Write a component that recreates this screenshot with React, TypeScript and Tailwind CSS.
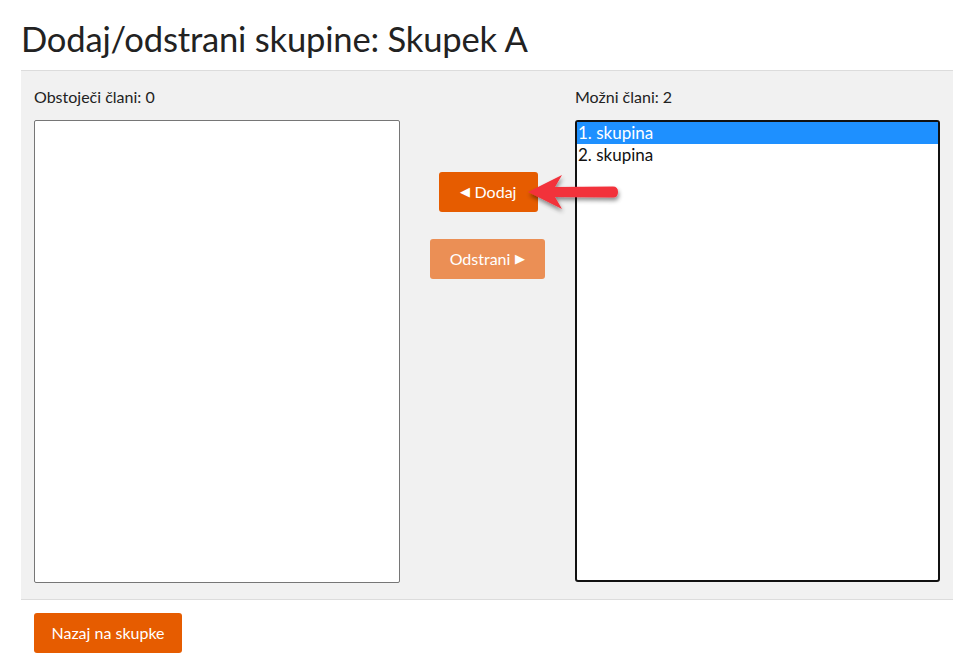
import React from 'react';

const font = { fontFamily: 'Lato, "Open Sans", sans-serif' };

function RedArrow() {
  return (
    <svg
      className="absolute left-[526px] top-[171px] pointer-events-none"
      width="98"
      height="46"
      viewBox="0 0 98 46"
    >
      <defs>
        <filter id="sh" x="-20%" y="-30%" width="140%" height="170%">
          <feDropShadow dx="1" dy="3" stdDeviation="2" floodColor="#000" floodOpacity="0.45" />
        </filter>
      </defs>
      <g filter="url(#sh)">
        <path
          d="M2 21 L36 4 L29 16 L87 15.5 Q92 15.5 92 21 Q92 26.5 87 26.5 L29 26 L36 38 Z"
          fill="#f2303a"
        />
      </g>
    </svg>
  );
}

export default function App() {
  return (
    <div className="relative w-[965px] h-[670px] bg-white text-[#222]" style={font}>
      <h1 className="pl-[21px] pt-[18px] text-[34.6px] leading-[42px] text-[#222] tracking-[-0.2px]">
        Dodaj/odstrani skupine: Skupek A
      </h1>

      {/* Panel */}
      <div className="ml-[21px] mt-[10px] w-[932px] h-[530px] bg-[#f1f1f1] border-t border-b border-[#dcdcdc] flex px-[13px] pt-[15px]">
        <div className="w-[366px] flex flex-col">
          <div className="text-[16px] leading-[20px] h-[34px] pt-[1px]">Obstoječi člani: 0</div>
          <div className="w-[366px] h-[463px] bg-white border border-[#767676] rounded-[2px]" />
        </div>

        <div className="w-[176px] flex flex-col items-center pt-[86px] gap-[27px]">
          <button className="w-[99px] h-[40px] bg-[#e65c00] text-white text-[16px] rounded-[3px] flex items-center justify-center gap-[5px] ml-[1px]">
            <span className="text-[13px]">◀</span>
            <span>Dodaj</span>
          </button>
          <button className="w-[115px] h-[40px] bg-[#eb8f55] text-white text-[16px] rounded-[3px] flex items-center justify-center gap-[5px]">
            <span>Odstrani</span>
            <span className="text-[13px]">▶</span>
          </button>
        </div>

        <div className="w-[365px] flex flex-col">
          <div className="text-[16px] leading-[20px] h-[34px] pt-[1px]">Možni člani: 2</div>
          <div className="w-[365px] h-[462px] bg-white border-2 border-[#111] rounded-[3px] text-[17px] leading-[22px]">
            <div className="bg-[#1e90ff] text-white pl-[1px]">1. skupina</div>
            <div className="text-[#111] pl-[1px]">2. skupina</div>
          </div>
        </div>
      </div>

      <div className="pl-[34px] pt-[13px]">
        <button className="w-[148px] h-[40px] bg-[#e65c00] text-white text-[16px] rounded-[3px]">
          Nazaj na skupke
        </button>
      </div>

      <RedArrow />
    </div>
  );
}
